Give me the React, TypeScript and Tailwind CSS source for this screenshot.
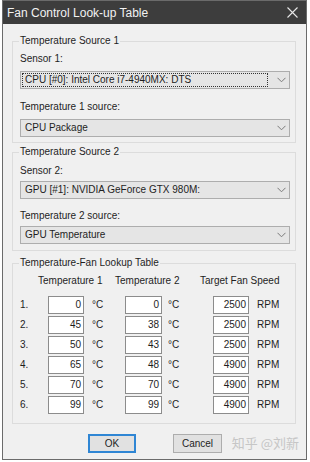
import React from "react";

const rows = [
  [0, 0, 2500],
  [45, 38, 2500],
  [50, 43, 2500],
  [65, 48, 4900],
  [70, 70, 4900],
  [99, 99, 4900],
];

const Chevron = () => (
  <svg width="9" height="6" viewBox="0 0 9 6" className="shrink-0">
    <polyline points="0.5,0.8 4.5,4.8 8.5,0.8" fill="none" stroke="#7a7a7a" strokeWidth="1" />
  </svg>
);

const Combo = ({ text, focused, className }: { text: string; focused?: boolean; className: string }) => (
  <div className={`flex h-[18px] items-center border border-[#adadad] bg-[#e5e5e5] pl-[1px] pr-[3px] ${className}`}>
    <div className={`flex h-[14px] flex-1 items-center pl-[2px] ${focused ? "mr-[9px] border border-dotted border-[#333]" : "border border-transparent"}`}>
      {text}
    </div>
    <Chevron />
  </div>
);

const Box = ({ v, w }: { v: number; w: string }) => (
  <div className={`flex h-[18px] ${w} items-center justify-end border border-[#8c8c8c] bg-white pr-[2px]`}>{v}</div>
);

export default function App() {
  return (
    <div className="h-[462px] w-[310px] bg-white font-['Liberation_Sans',Arial,sans-serif] text-[10px] leading-[12px] text-[#1e1e1e]">
      <div className="relative ml-[2px] flex h-[460px] w-[305px] flex-col border border-[#6b6b6b] bg-[#f0f0f0]">
        <div className="flex h-[23px] shrink-0 items-center justify-between bg-[#3d3d3d] pl-[4px] pr-[8px] text-[12px] text-[#f2f2f2]">
          <span>Fan Control Look-up Table</span>
          <svg width="11" height="11" viewBox="0 0 11 11">
            <path d="M0.5 0.5 L10.5 10.5 M10.5 0.5 L0.5 10.5" stroke="#e8e8e8" strokeWidth="1.1" />
          </svg>
        </div>

        <fieldset className="ml-[9px] mr-[10px] mt-[11px] border border-[#dcdcdc] pb-[5px] pl-[7px] pr-[5px]">
          <legend className="ml-[-1px] px-[1px]">Temperature Source 1</legend>
          <div className="mt-[6px]">Sensor 1:</div>
          <Combo className="mt-[6px]" text="CPU [#0]: Intel Core i7-4940MX: DTS" focused />
          <div className="mt-[12px]">Temperature 1 source:</div>
          <Combo className="mt-[6px]" text="CPU Package" />
        </fieldset>

        <fieldset className="ml-[9px] mr-[10px] mt-[3px] border border-[#dcdcdc] pb-[6px] pl-[7px] pr-[5px]">
          <legend className="ml-[-1px] px-[1px]">Temperature Source 2</legend>
          <div className="mt-[7px]">Sensor 2:</div>
          <Combo className="mt-[4px]" text="GPU [#1]: NVIDIA GeForce GTX 980M:" />
          <div className="mt-[11px]">Temperature 2 source:</div>
          <Combo className="mt-[4px]" text="GPU Temperature" />
        </fieldset>

        <fieldset className="ml-[9px] mr-[10px] mt-[6px] border border-[#dcdcdc] pb-[9px] pl-[7px] pr-[5px]">
          <legend className="ml-[-1px] px-[1px]">Temperature-Fan Lookup Table</legend>
          <div className="mt-[6px] grid grid-cols-[77px_85px_auto] pl-[18px]">
            <span>Temperature 1</span>
            <span>Temperature 2</span>
            <span>Target Fan Speed</span>
          </div>
          <div className="mt-[9px] flex flex-col gap-[2px]">
            {rows.map((r, i) => (
              <div key={i} className="flex items-center">
                <span className="w-[28px]">{i + 1}.</span>
                <Box v={r[0]} w="w-[36px]" />
                <span className="w-[41px] pl-[8px]">°C</span>
                <Box v={r[1]} w="w-[37px]" />
                <span className="w-[51px] pl-[6px]">°C</span>
                <Box v={r[2]} w="w-[36px]" />
                <span className="pl-[8px]">RPM</span>
              </div>
            ))}
          </div>
        </fieldset>

        <div className="ml-[85px] mt-[10px] flex gap-[37px]">
          <div className="flex h-[19px] w-[48px] items-center justify-center border-2 border-[#2f86d4] bg-[#e1e1e1]">OK</div>
          <div className="flex h-[19px] w-[49px] items-center justify-center border border-[#adadad] bg-[#e1e1e1]">Cancel</div>
        </div>

        <span className="absolute bottom-[8px] right-[7px] font-['Noto_Sans_CJK_SC',sans-serif] text-[13px] leading-[16px] text-[#c6c6c6]">
          知乎 @刘新
        </span>
      </div>
    </div>
  );
}
